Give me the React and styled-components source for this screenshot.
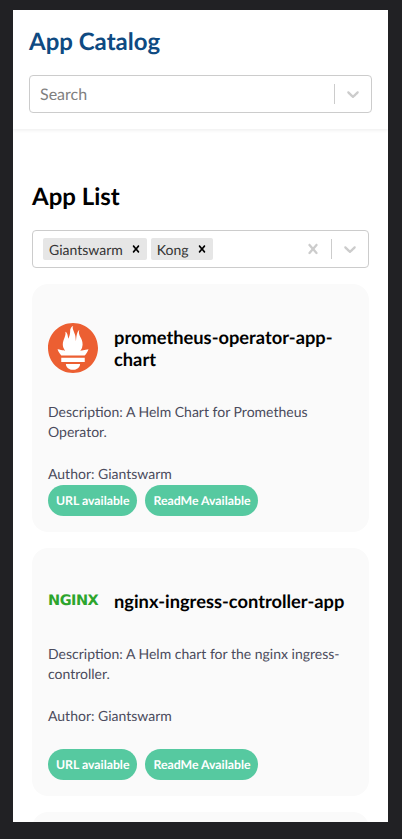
import React from 'react'
import styled, { createGlobalStyle } from 'styled-components'
import { SiPrometheus } from 'react-icons/si'

const chevronPath = 'M4.516 7.548c0.436-0.446 1.043-0.481 1.576 0l3.908 3.747 3.908-3.747c0.533-0.481 1.141-0.446 1.574 0 0.436 0.445 0.408 1.197 0 1.615-0.406 0.418-4.695 4.502-4.695 4.502-0.217 0.223-0.502 0.335-0.787 0.335s-0.57-0.112-0.789-0.335c0 0-4.287-4.084-4.695-4.502s-0.436-1.17 0-1.615z'
const crossPath = 'M14.348 14.849c-0.469 0.469-1.229 0.469-1.697 0l-2.651-3.030-2.651 3.029c-0.469 0.469-1.229 0.469-1.697 0-0.469-0.469-0.469-1.229 0-1.697l2.758-3.15-2.759-3.152c-0.469-0.469-0.469-1.228 0-1.697s1.228-0.469 1.697 0l2.652 3.031 2.651-3.031c0.469-0.469 1.228-0.469 1.697 0s0.469 1.229 0 1.697l-2.758 3.152 2.758 3.15c0.469 0.469 0.469 1.229 0 1.698z'

const GlobalStyle = createGlobalStyle`
  html, body {
    margin: 0;
    height: 100%;
    background: #212124;
    font-family: Lato, "Open Sans", sans-serif;
    text-rendering: geometricPrecision;
  }
`

const Screen = styled.div`
  box-sizing: border-box;
  width: 402px;
  height: 839px;
  padding: 10px 14px 17px 13px;
  overflow: hidden;
`

const Panel = styled.div`
  height: 812px;
  background: #fff;
  overflow: hidden;
`

const Header = styled.header`
  box-sizing: border-box;
  height: 119px;
  padding: 17px 16px 0;
  box-shadow: 0 1px 4px rgba(0, 0, 0, 0.08);
`

const Title = styled.h1`
  margin: 0 0 18px;
  font-size: 24px;
  line-height: 30px;
  font-weight: 700;
  color: #0e4a82;
`

const SelectBox = styled.div`
  box-sizing: border-box;
  display: flex;
  align-items: center;
  height: 38px;
  border: 1px solid #ccc;
  border-radius: 4px;
  background: #fff;
`

const SelectValue = styled.div`
  flex: 1;
  display: flex;
  align-items: center;
  gap: 4px;
  padding: 0 10px;
`

const Placeholder = styled.span`
  font-size: 16px;
  color: #808080;
`

const Tag = styled.span`
  display: flex;
  align-items: center;
  height: 22px;
  padding-left: 6px;
  border-radius: 2px;
  background: #e6e6e6;
  font-size: 14px;
  color: #333;
`

const TagRemove = styled.span`
  display: flex;
  align-items: center;
  margin-left: 2px;
  padding: 0 4px;
  color: #000;
`

const Indicator = styled.span`
  display: flex;
  padding: 8px;
  color: #ccc;
`

const Separator = styled.span`
  width: 1px;
  height: 20px;
  background: #ccc;
`

const Content = styled.main`
  padding: 53px 19px 0;
`

const ListTitle = styled.h2`
  margin: 0 0 18px;
  font-size: 24px;
  line-height: 30px;
  font-weight: 700;
  color: #000;
`

const Cards = styled.div`
  display: flex;
  flex-direction: column;
  gap: 16px;
  margin-top: 16px;
`

const Card = styled.article`
  box-sizing: border-box;
  display: flex;
  flex-direction: column;
  flex-shrink: 0;
  height: 248px;
  padding: 42px 16px 16px;
  border-radius: 16px;
  background: #fafafa;
`

const CardHead = styled.div`
  display: flex;
  align-items: center;
  gap: 16px;
  margin-bottom: 32px;
`

const LogoCircle = styled.span`
  flex-shrink: 0;
  display: flex;
  width: 50px;
  height: 50px;
  margin: -3px 0;
  border-radius: 50%;
  background: #fff;
`

const NginxMark = styled.span`
  flex-shrink: 0;
  width: 50px;
  font-family: "DejaVu Sans", sans-serif;
  font-size: 14.5px;
  line-height: 14px;
  font-weight: 700;
  letter-spacing: -0.5px;
  color: #2ca52c;
`

const CardName = styled.h3`
  margin: 0;
  font-size: 18.3px;
  line-height: 22px;
  font-weight: 700;
  color: #000;
`

const CardText = styled.p`
  margin: 0 0 22px;
  font-size: 14px;
  line-height: 20px;
  color: #4a4b5c;

  &:last-of-type {
    margin-bottom: 0;
  }
`

const Badges = styled.div`
  display: flex;
  gap: 8px;
  margin-top: auto;
`

const Badge = styled.span`
  display: flex;
  align-items: center;
  height: 31px;
  padding: 0 8px;
  border-radius: 16px;
  background: #56c9a0;
  font-size: 12.25px;
  font-weight: 700;
  color: #fff;
`

const Glyph = ({ path, size }) => (
  <svg width={size} height={size} viewBox="0 0 20 20" fill="currentColor" aria-hidden="true">
    <path d={path} />
  </svg>
)

const apps = [
  {
    name: 'prometheus-operator-app-chart',
    description: 'Description: A Helm Chart for Prometheus Operator.',
    logo: (
      <LogoCircle>
        <SiPrometheus size={50} color="#ec5f32" />
      </LogoCircle>
    ),
  },
  {
    name: 'nginx-ingress-controller-app',
    description: 'Description: A Helm chart for the nginx ingress-controller.',
    logo: <NginxMark>NGINX</NginxMark>,
  },
  { name: '', description: '', logo: null },
]

export default function App() {
  return (
    <Screen>
      <GlobalStyle />
      <Panel>
        <Header>
          <Title>App Catalog</Title>
          <SelectBox>
            <SelectValue>
              <Placeholder>Search</Placeholder>
            </SelectValue>
            <Separator />
            <Indicator>
              <Glyph path={chevronPath} size={20} />
            </Indicator>
          </SelectBox>
        </Header>
        <Content>
          <ListTitle>App List</ListTitle>
          <SelectBox>
            <SelectValue>
              {['Giantswarm', 'Kong'].map((tag) => (
                <Tag key={tag}>
                  {tag}
                  <TagRemove>
                    <Glyph path={crossPath} size={14} />
                  </TagRemove>
                </Tag>
              ))}
            </SelectValue>
            <Indicator>
              <Glyph path={crossPath} size={20} />
            </Indicator>
            <Separator />
            <Indicator>
              <Glyph path={chevronPath} size={20} />
            </Indicator>
          </SelectBox>
          <Cards>
            {apps.map((app, i) => (
              <Card key={i}>
                {app.name && (
                  <>
                    <CardHead>
                      {app.logo}
                      <CardName>{app.name}</CardName>
                    </CardHead>
                    <CardText>{app.description}</CardText>
                    <CardText>Author: Giantswarm</CardText>
                    <Badges>
                      <Badge>URL available</Badge>
                      <Badge>ReadMe Available</Badge>
                    </Badges>
                  </>
                )}
              </Card>
            ))}
          </Cards>
        </Content>
      </Panel>
    </Screen>
  )
}
